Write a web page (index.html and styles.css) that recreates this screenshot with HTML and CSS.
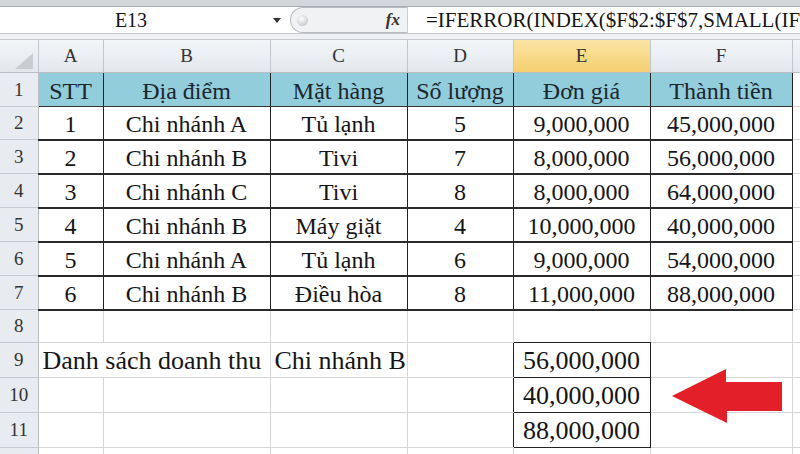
FILE: index.html
```html
<!DOCTYPE html>
<html lang="vi">
<head>
    <meta charset="UTF-8">
    <meta name="viewport" content="width=device-width, initial-scale=1.0">
    <title>Danh sách doanh thu</title>
    <link rel="stylesheet" href="styles.css">
</head>
<body>
    <!-- Formula bar -->
    <div class="ribbon-edge"></div>
    <div class="formula-row">
        <div class="name-box">
            <span class="cell-ref">E13</span>
            <span class="dropdown"></span>
        </div>
        <div class="fx-area">
            <span class="knob"></span>
            <span class="fx">fx</span>
        </div>
        <div class="formula-input">=IFERROR(INDEX($F$2:$F$7,SMALL(IF<span class="paren">(</span>$B$2:$B$7=$C$9,ROW($B$2:$B$7)-1),ROW(A1))),"")</div>
    </div>
    <div class="gap-band"></div>

    <!-- Sheet -->
    <table class="sheet">
        <colgroup>
            <col style="width:38px">
            <col style="width:65px">
            <col style="width:167px">
            <col style="width:137px">
            <col style="width:106px">
            <col style="width:137px">
            <col style="width:142px">
            <col style="width:60px">
        </colgroup>
        <tr class="col-head">
            <th class="corner"><svg width="18" height="16" viewBox="0 0 18 16"><polygon points="18,0 18,16 0,16" fill="#c9cdd2"/></svg></th>
            <th>A</th><th>B</th><th>C</th><th>D</th><th class="active">E</th><th>F</th><th></th>
        </tr>
        <tr class="tbl head-row r34">
            <th class="row-head">1</th>
            <td>STT</td><td>Địa điểm</td><td>Mặt hàng</td><td>Số lượng</td><td>Đơn giá</td><td>Thành tiền</td><td class="out"></td>
        </tr>
        <tr class="tbl r33">
            <th class="row-head">2</th>
            <td>1</td><td>Chi nhánh A</td><td>Tủ lạnh</td><td>5</td><td>9,000,000</td><td>45,000,000</td><td class="out"></td>
        </tr>
        <tr class="tbl r34">
            <th class="row-head">3</th>
            <td>2</td><td>Chi nhánh B</td><td>Tivi</td><td>7</td><td>8,000,000</td><td>56,000,000</td><td class="out"></td>
        </tr>
        <tr class="tbl r34">
            <th class="row-head">4</th>
            <td>3</td><td>Chi nhánh C</td><td>Tivi</td><td>8</td><td>8,000,000</td><td>64,000,000</td><td class="out"></td>
        </tr>
        <tr class="tbl r34">
            <th class="row-head">5</th>
            <td>4</td><td>Chi nhánh B</td><td>Máy giặt</td><td>4</td><td>10,000,000</td><td>40,000,000</td><td class="out"></td>
        </tr>
        <tr class="tbl r34">
            <th class="row-head">6</th>
            <td>5</td><td>Chi nhánh A</td><td>Tủ lạnh</td><td>6</td><td>9,000,000</td><td>54,000,000</td><td class="out"></td>
        </tr>
        <tr class="tbl r34">
            <th class="row-head">7</th>
            <td>6</td><td>Chi nhánh B</td><td>Điều hòa</td><td>8</td><td>11,000,000</td><td>88,000,000</td><td class="out"></td>
        </tr>
        <tr class="r33">
            <th class="row-head">8</th>
            <td></td><td></td><td></td><td></td><td class="box-top"></td><td></td><td></td>
        </tr>
        <tr class="big r35">
            <th class="row-head">9</th>
            <td colspan="2" class="left">Danh sách doanh thu</td><td class="left">Chi nhánh B</td><td class="box-left"></td><td class="box">56,000,000</td><td></td><td></td>
        </tr>
        <tr class="big r35">
            <th class="row-head">10</th>
            <td></td><td></td><td></td><td class="box-left"></td><td class="box">40,000,000</td><td></td><td></td>
        </tr>
        <tr class="big r35">
            <th class="row-head">11</th>
            <td></td><td></td><td></td><td class="box-left"></td><td class="box">88,000,000</td><td></td><td></td>
        </tr>
        <tr class="big r35">
            <th class="row-head">12</th>
            <td></td><td></td><td></td><td></td><td></td><td></td><td></td>
        </tr>
    </table>

    <!-- Red arrow pointing at the result -->
    <svg class="arrow" width="114" height="56" viewBox="0 0 114 56">
        <polygon points="2,28 56,1 56,14 112,14 112,43 57,43 57,55" fill="#e3202a"/>
    </svg>
</body>
</html>
```

FILE: styles.css
```css
/* Page */
body {
    margin: 0;
    width: 800px;
    height: 454px;
    overflow: hidden;
    position: relative;
    background: #fff;
    font-family: "Liberation Serif", "Times New Roman", serif;
    color: #151515;
}

/* Formula bar */
.ribbon-edge {
    height: 6px;
    background: #d3d6db;
    border-bottom: 1px solid #a9adb3;
}

.formula-row {
    display: flex;
    height: 26px;
    background: #fff;
    border-bottom: 1px solid #c3c7cc;
}

.name-box {
    width: 290px;
    display: flex;
    align-items: center;
}

.cell-ref {
    width: 262px;
    text-align: center;
    font-size: 20px;
}

.dropdown {
    width: 0;
    height: 0;
    margin-left: 11px;
    border-left: 4px solid transparent;
    border-right: 4px solid transparent;
    border-top: 5px solid #333;
}

.fx-area {
    width: 117px;
    box-sizing: border-box;
    display: flex;
    align-items: center;
    background: #f1f2f4;
    border: 1px solid #b7bbc1;
    border-right: none;
    border-radius: 14px 0 0 14px;
}

.knob {
    width: 11px;
    height: 11px;
    margin-left: 6px;
    border-radius: 50%;
    background: radial-gradient(circle at 40% 35%, #fff, #b4b8be);
}

.fx {
    margin-left: auto;
    margin-right: 7px;
    font-style: italic;
    font-weight: bold;
    font-size: 17px;
    color: #333;
}

.formula-input {
    flex: 1;
    overflow: hidden;
    white-space: nowrap;
    padding-left: 18px;
    border-left: 1px solid #c9ccd1;
    font-size: 21px;
    line-height: 26px;
}

.paren {
    color: #e08a1e;
}

.gap-band {
    height: 5px;
    background: #eef0f3;
    border-bottom: 1px solid #c5c9ce;
}

/* Sheet grid */
.sheet {
    border-collapse: collapse;
    table-layout: fixed;
    width: 852px;
}

.sheet th,
.sheet td {
    padding: 0;
    border-right: 1px solid #d6d6d6;
    border-bottom: 1px solid #d6d6d6;
}

.sheet td {
    font-size: 24px;
    line-height: 26px;
    text-align: center;
    vertical-align: middle;
    padding-top: 2px;
    white-space: nowrap;
}

.col-head th {
    height: 29px;
    font-weight: normal;
    font-size: 19px;
    color: #333;
    background: linear-gradient(#f3f5f8, #e3e7ec);
    border-right: 1px solid #c2c7cd;
    border-bottom: 1px solid #b9bec4;
}

.col-head .active {
    background: linear-gradient(#fae4a4, #f5cf70);
}

.col-head .corner {
    text-align: right;
    vertical-align: bottom;
    padding: 0 5px 3px 0;
}

.corner svg {
    display: block;
    margin-left: auto;
}

.row-head {
    font-weight: normal;
    font-size: 19px;
    color: #333;
    background: #e8ebef;
}

.sheet .row-head {
    border-right: 1px solid #b9bec4;
    border-bottom: 1px solid #c6cbd1;
}

.r33 { height: 33px; }
.r34 { height: 34px; }
.r35 { height: 35px; }

/* Bordered data table */
.tbl td {
    border-right: 1px solid #222;
    border-bottom: 2px solid #2a2a2a;
}

.head-row td {
    background: #92cddc;
    border-bottom: 1px solid #333;
    color: #1b262c;
}

.sheet .tbl .out {
    background: #fff;
    border-right: 1px solid #d6d6d6;
    border-bottom: 1px solid #d6d6d6;
}

/* Lookup result */
.big td {
    font-size: 26px;
}

.sheet td.left {
    text-align: left;
    padding-left: 4px;
}

.sheet td.box-top {
    border-bottom: 1px solid #222;
}

.sheet td.box-left {
    border-right: 1px solid #222;
}

.sheet td.box {
    border-right: 1px solid #222;
    border-bottom: 1px solid #222;
}

.arrow {
    position: absolute;
    left: 670px;
    top: 368px;
}
```
